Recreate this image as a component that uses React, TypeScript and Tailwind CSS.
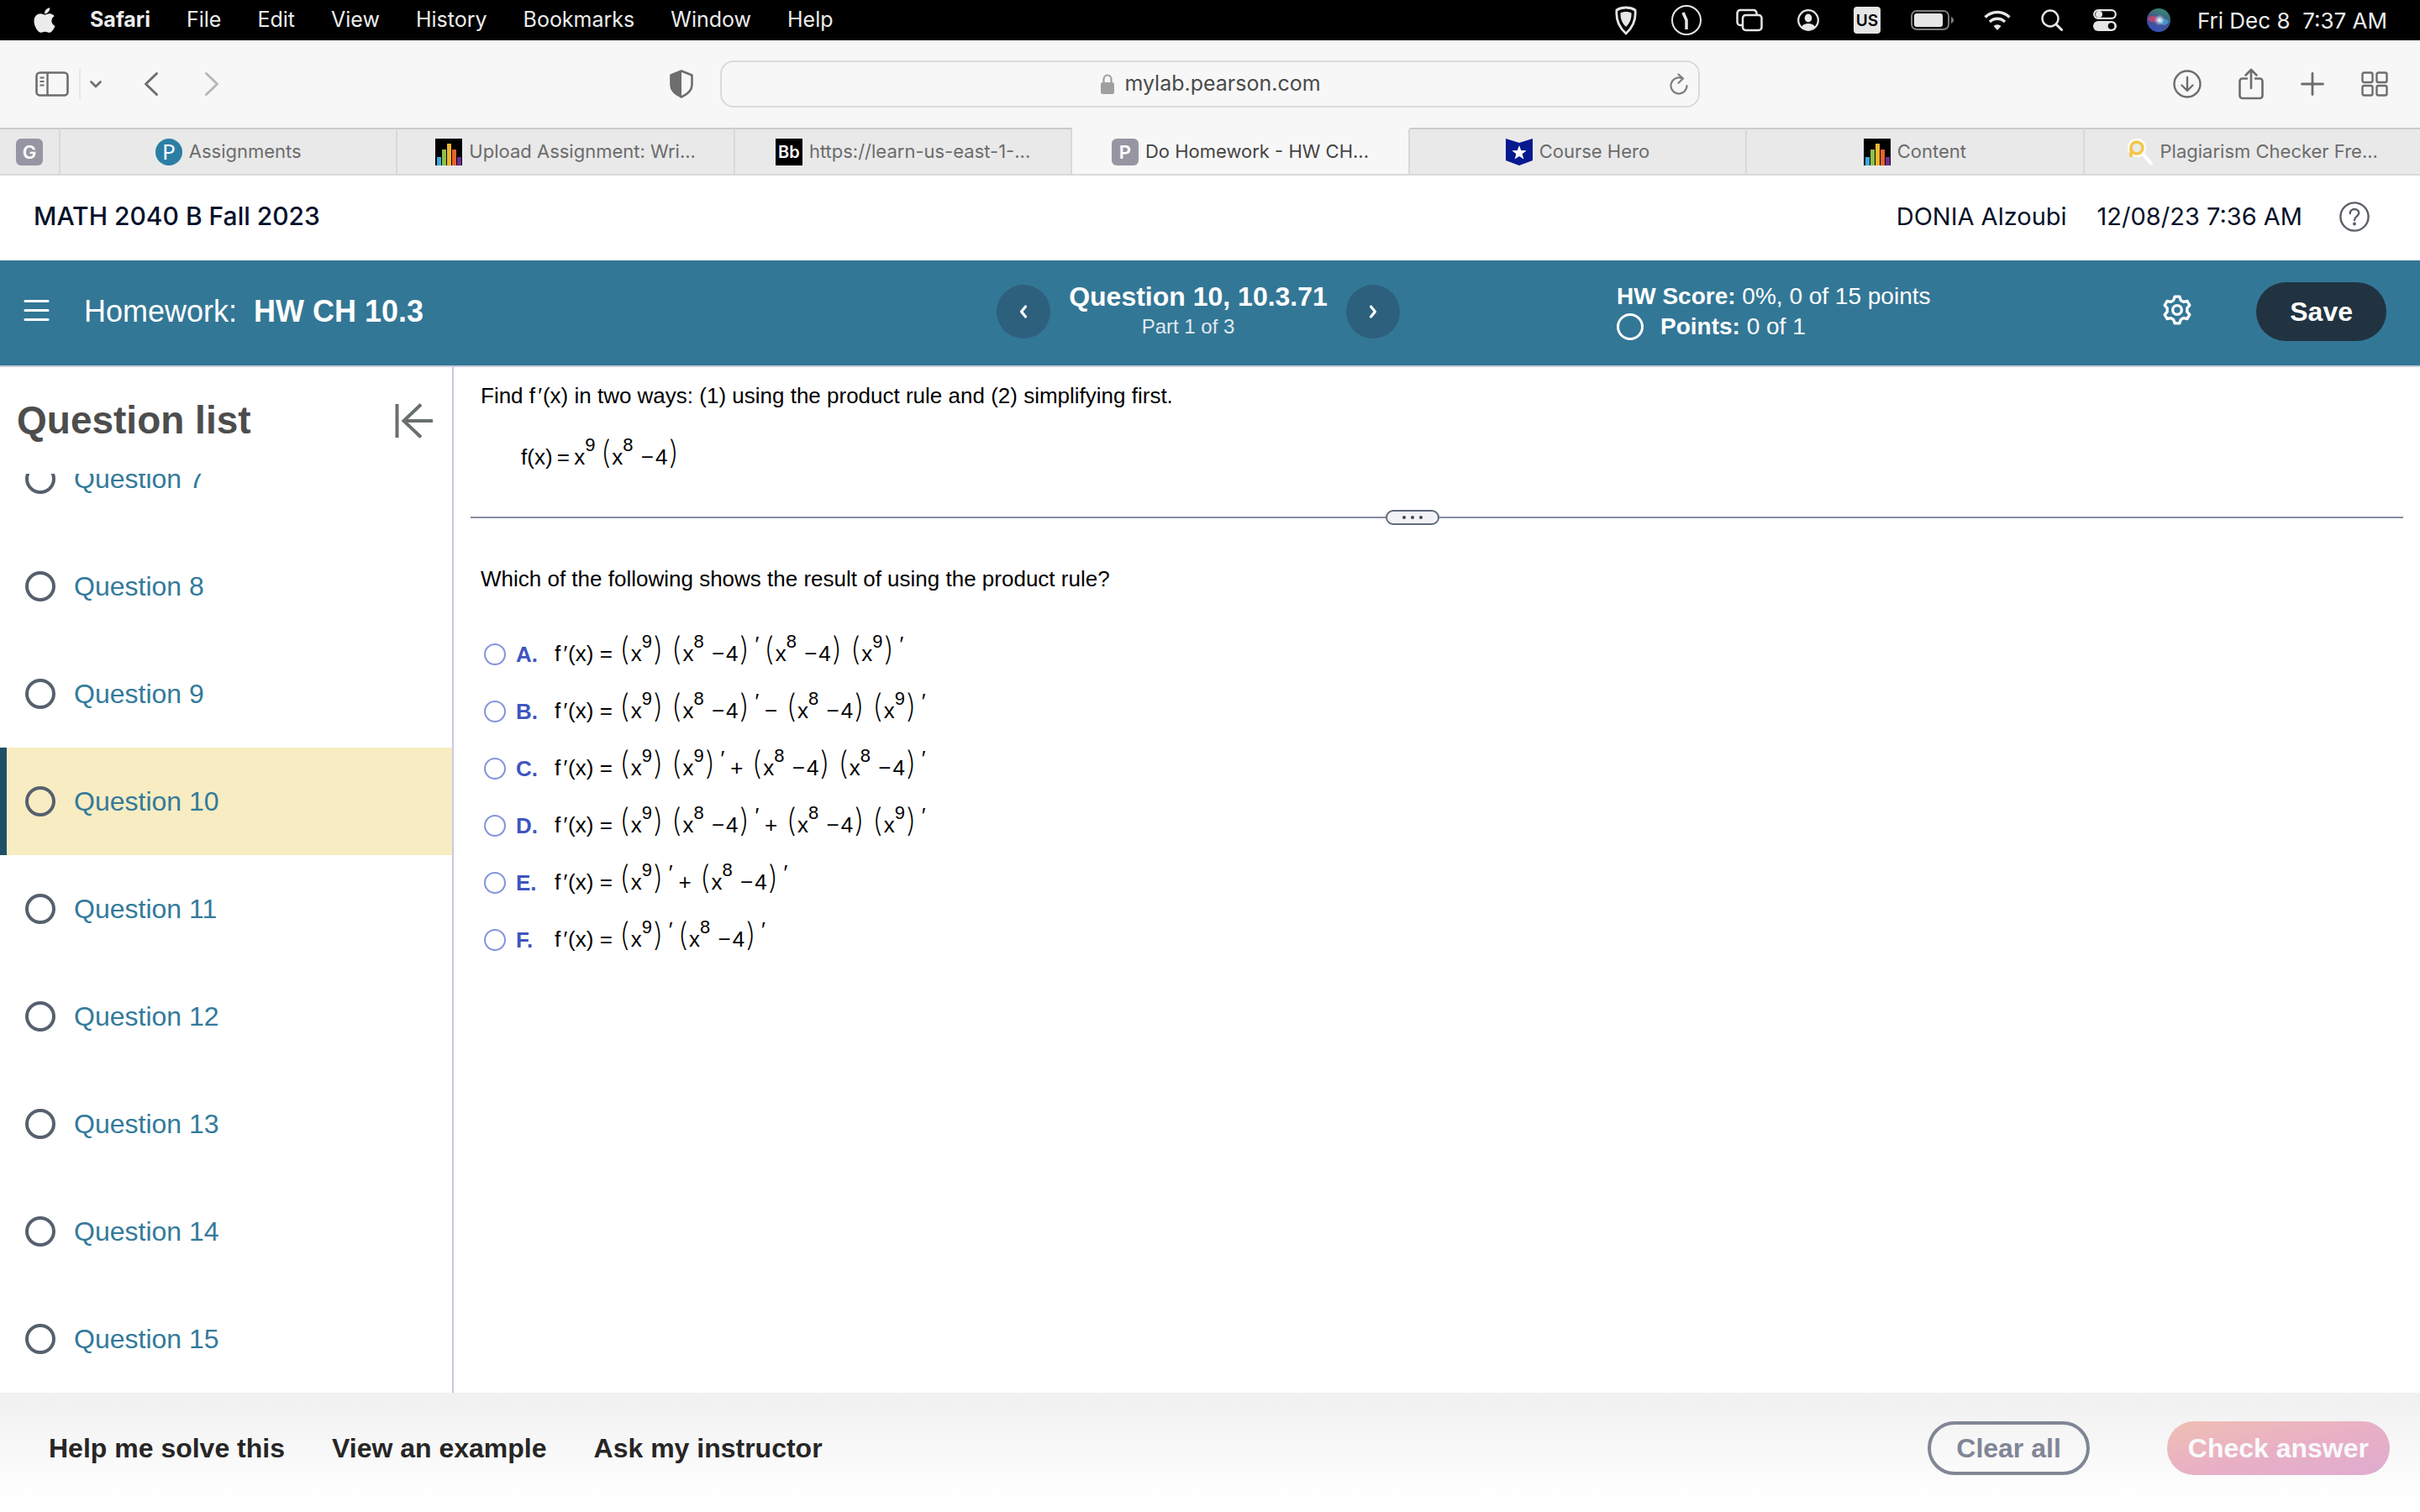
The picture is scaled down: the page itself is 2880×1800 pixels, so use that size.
import { Fragment, useState } from "react";
import type { ReactNode } from "react";
import { FaApple } from "react-icons/fa";

const menuItems = ["File", "Edit", "View", "History", "Bookmarks", "Window", "Help"];

const questions = [7, 8, 9, 10, 11, 12, 13, 14, 15];

// Formula markup: "(" and ")" are tall delimiters, "^" raises the next digit,
// "'" is a prime on a group, everything else is a plain run.
const choices = [
  { letter: "A", formula: "(x^9) (x^8 −4)'(x^8 −4) (x^9)'" },
  { letter: "B", formula: "(x^9) (x^8 −4)'− (x^8 −4) (x^9)'" },
  { letter: "C", formula: "(x^9) (x^9)'+ (x^8 −4) (x^8 −4)'" },
  { letter: "D", formula: "(x^9) (x^8 −4)'+ (x^8 −4) (x^9)'" },
  { letter: "E", formula: "(x^9)'+ (x^8 −4)'" },
  { letter: "F", formula: "(x^9)'(x^8 −4)'" },
];

/* ---------- Icons ---------- */

const BarsIcon = () => (
  <svg className="size-8 shrink-0" viewBox="0 0 32 32" aria-hidden="true">
    <rect width="32" height="32" fill="#000" />
    <rect x="2" y="22" width="5" height="10" fill="#3fa9e0" />
    <rect x="8" y="13" width="5" height="19" fill="#8dc04b" />
    <rect x="14" y="6" width="5" height="26" fill="#f0b52f" />
    <rect x="20" y="13" width="5" height="19" fill="#e8622e" />
    <rect x="26" y="22" width="5" height="10" fill="#6b2f91" />
  </svg>
);

const CourseHeroIcon = () => (
  <svg className="size-8 shrink-0" viewBox="0 0 32 32" aria-hidden="true">
    <path d="M0 0l16 5 16-5v26l-16 6-16-6z" fill="#06198f" />
    <path
      d="M16 8l2.2 6.1 6.5.2-5.1 4 1.8 6.2-5.4-3.6-5.4 3.6 1.8-6.2-5.1-4 6.5-.2z"
      fill="#fff"
    />
  </svg>
);

const MagnifierFavicon = () => (
  <svg className="size-8 shrink-0" viewBox="0 0 32 32" fill="none" aria-hidden="true">
    <path d="M20 19l10 12" stroke="#fff" strokeWidth="4" />
    <circle cx="12" cy="11" r="11" fill="#fff" />
    <circle cx="12" cy="11" r="7" fill="#e9e9e9" stroke="#f3c64a" strokeWidth="3.5" />
    <path d="M5 11v11" stroke="#f3c64a" strokeWidth="3.5" />
  </svg>
);

const LetterIcon = ({ letter }: { letter: string }) => (
  <span className="flex size-8 shrink-0 items-center justify-center rounded-md bg-[#9696a3] text-[22px] leading-none font-semibold text-white">
    {letter}
  </span>
);

const PearsonIcon = () => (
  <span className="flex size-8 shrink-0 items-center justify-center rounded-full bg-[#2c7ea5] font-['Lato'] text-[25px] leading-none text-white">
    P
  </span>
);

const BlackboardIcon = () => (
  <span className="flex size-8 shrink-0 items-center justify-center bg-black text-[20px] leading-none font-semibold text-white">
    Bb
  </span>
);

const ShieldIcon = () => (
  <svg className="h-9 w-[26px]" viewBox="0 0 26 36" aria-hidden="true">
    <path
      d="M13 3c4 0 8 1 11 3 1 10-2 20-11 28C4 26 1 16 2 6c3-2 7-3 11-3z"
      fill="none"
      stroke="#e6e6e6"
      strokeWidth="2.8"
    />
    <path
      d="M13 8c3 0 4.800.5 6.500 1.500.3 6.500-1.800 12-6.500 16.500-4.700-4.500-6.800-10-6.500-16.500C8.200 8.500 10 8 13 8z"
      fill="#e6e6e6"
    />
  </svg>
);

const ClockIcon = () => (
  <svg className="size-9" viewBox="0 0 36 36" fill="none" stroke="#e6e6e6" aria-hidden="true">
    <circle cx="18" cy="18" r="17" strokeWidth="2" />
    <path d="M14 9l4 9v11" strokeWidth="3.5" strokeLinejoin="round" />
  </svg>
);

const WindowsIcon = () => (
  <svg
    className="h-7 w-8"
    viewBox="0 0 32 28"
    fill="none"
    stroke="#e6e6e6"
    strokeWidth="2.5"
    aria-hidden="true"
  >
    <path d="M7 20H5a3.500 3.500 0 0 1-3.500-3.500v-11A3.500 3.500 0 0 1 5 2h16a3.500 3.500 0 0 1 3.500 3.500V7" />
    <rect x="8" y="8" width="22.5" height="18" rx="3.5" />
  </svg>
);

const UserIcon = () => (
  <svg className="size-[26px]" viewBox="0 0 26 26" aria-hidden="true">
    <circle cx="13" cy="13" r="11.8" fill="none" stroke="#e6e6e6" strokeWidth="2.2" />
    <ellipse cx="13" cy="10.5" rx="4.3" ry="5" fill="#e6e6e6" />
    <path d="M5 21c1.500-3 4.500-4 8-4s6.500 1 8 4c-2 2.500-5 3.500-8 3.500s-6-1-8-3.500z" fill="#e6e6e6" />
  </svg>
);

const BatteryIcon = () => (
  <svg className="h-6 w-[51px]" viewBox="0 0 51 24" aria-hidden="true">
    <rect x="1" y="1" width="44" height="22" rx="6" fill="none" stroke="#7c7c7c" strokeWidth="2" />
    <rect x="4" y="4" width="34" height="16" rx="3" fill="#e6e6e6" />
    <path d="M48 8c4 1.500 4 6.500 0 8z" fill="#7c7c7c" />
  </svg>
);

const WifiIcon = () => (
  <svg
    className="h-6 w-8"
    viewBox="0 0 32 24"
    fill="none"
    stroke="#e6e6e6"
    strokeWidth="3.4"
    aria-hidden="true"
  >
    <path d="M1.500 8.500a20.500 20.500 0 0 1 29 0" />
    <path d="M7 14a12.700 12.700 0 0 1 18 0" />
    <path d="M16 24l-4.500-5a6.500 6.500 0 0 1 9 0z" fill="#e6e6e6" stroke="none" />
  </svg>
);

const SearchIcon = () => (
  <svg className="size-[26px]" viewBox="0 0 26 26" fill="none" stroke="#e6e6e6" aria-hidden="true">
    <circle cx="11" cy="11" r="9.5" strokeWidth="2.4" />
    <path d="M18 18l6.500 6.500" strokeWidth="3" strokeLinecap="round" />
  </svg>
);

const ControlCentreIcon = () => (
  <svg className="h-[26px] w-7" viewBox="0 0 28 26" aria-hidden="true">
    <rect
      x="1.2"
      y="1.2"
      width="25.6"
      height="9.6"
      rx="4.8"
      fill="none"
      stroke="#e6e6e6"
      strokeWidth="2.2"
    />
    <circle cx="7" cy="6" r="4" fill="#e6e6e6" />
    <rect y="14" width="28" height="12" rx="6" fill="#e6e6e6" />
    <circle cx="21.5" cy="20" r="3.8" fill="#000" />
  </svg>
);

const SiriIcon = () => (
  <svg className="size-7" viewBox="0 0 28 28" aria-hidden="true">
    <defs>
      <radialGradient id="siriGlow">
        <stop offset="0" stopColor="#fff" />
        <stop offset="0.45" stopColor="#c8dcf5" stopOpacity="0.6" />
        <stop offset="1" stopColor="#3c4a8c" stopOpacity="0" />
      </radialGradient>
      <linearGradient id="siriBase" x1="0.2" y1="1" x2="0.6" y2="0">
        <stop offset="0" stopColor="#2f55c8" />
        <stop offset="0.5" stopColor="#4a4f8a" />
        <stop offset="1" stopColor="#2f8a72" />
      </linearGradient>
    </defs>
    <circle cx="14" cy="14" r="14" fill="url(#siriBase)" />
    <path d="M1 12c4-5 10-3 14 2-5 3-11 4-14-2z" fill="#d4426d" opacity="0.8" />
    <path d="M14 15c5-4 10-3 12 1-3 5-8 6-12-1z" fill="#3ea8d8" opacity="0.8" />
    <circle cx="15" cy="14" r="8" fill="url(#siriGlow)" />
  </svg>
);

/* ---------- Browser chrome ---------- */

const MenuBar = () => (
  <header className="flex h-12 items-center justify-between bg-black pr-[39px] pl-9 text-[25px] text-[#ececec]">
    <nav className="flex items-center gap-[43px]">
      <FaApple className="-mr-1.5 size-[34px]" aria-label="Apple" />
      <span className="font-bold">Safari</span>
      {menuItems.map((item) => (
        <span key={item}>{item}</span>
      ))}
    </nav>
    <div className="flex items-center gap-9">
      <div className="flex items-center gap-[41px]">
        <ShieldIcon />
        <ClockIcon />
        <WindowsIcon />
        <UserIcon />
        <span className="flex size-8 items-center justify-center rounded bg-[#e6e6e6] text-[19px] leading-none font-semibold text-black">
          US
        </span>
      </div>
      <BatteryIcon />
      <WifiIcon />
      <SearchIcon />
      <ControlCentreIcon />
      <SiriIcon />
      <span className="-ml-1 text-[26px] whitespace-pre">Fri Dec 8  7:37 AM</span>
    </div>
  </header>
);

const Toolbar = () => (
  <div className="flex h-[104px] items-center bg-[#f7f7f7] px-[38px] text-[#6d6d6d]">
    <div className="flex flex-1 items-center justify-between">
      <div className="flex items-center">
        <button aria-label="Show sidebar" className="pl-1">
          <svg className="h-[30px] w-10" viewBox="0 0 40 30" fill="none" stroke="currentColor">
            <rect x="1.5" y="1.5" width="37" height="27" rx="4" strokeWidth="2.6" />
            <path d="M14.500 1.500v27" strokeWidth="2.4" />
            <path d="M5.500 7.500h5M5.500 12h5M5.500 16.500h5" strokeWidth="2" />
          </svg>
        </button>
        <span className="ml-3 h-9 w-0.5 bg-[#e6e6e6]" />
        <button aria-label="Tab groups" className="ml-[10px]">
          <svg
            className="h-5 w-4"
            viewBox="0 0 16 20"
            fill="none"
            stroke="currentColor"
            strokeWidth="2.6"
            strokeLinecap="round"
            strokeLinejoin="round"
          >
            <path d="M2.500 7.500l5.500 5.500 5.500-5.500" />
          </svg>
        </button>
        <button aria-label="Back" className="ml-12">
          <svg
            className="h-[30px] w-5"
            viewBox="0 0 20 30"
            fill="none"
            stroke="currentColor"
            strokeWidth="3"
            strokeLinecap="round"
            strokeLinejoin="round"
          >
            <path d="M16.500 2.500L3.500 15l13 12.500" />
          </svg>
        </button>
        <button aria-label="Forward" className="ml-[52px] text-[#b9b9b9]">
          <svg
            className="h-[30px] w-5"
            viewBox="0 0 20 30"
            fill="none"
            stroke="currentColor"
            strokeWidth="3"
            strokeLinecap="round"
            strokeLinejoin="round"
          >
            <path d="M3.500 2.500l13 12.500-13 12.500" />
          </svg>
        </button>
      </div>
      <button aria-label="Privacy report" className="mr-8">
        <svg className="h-[34px] w-[28px]" viewBox="0 0 28 34">
          <path
            d="M14 1.500l12.500 5V18c0 7-6 11.500-12.500 14.500C7.500 29.500 1.500 25 1.500 18V6.500z"
            fill="none"
            stroke="currentColor"
            strokeWidth="2.6"
            strokeLinejoin="round"
          />
          <path d="M14 1.500v31C7.500 29.500 1.500 25 1.500 18V6.500z" fill="currentColor" />
        </svg>
      </button>
    </div>
    <div className="flex h-14 w-[42%] max-w-[1166px] items-center rounded-2xl border-2 border-[#dadada] px-3">
      <label className="flex flex-1 items-center justify-center gap-3 pl-6">
        <svg className="h-6 w-4" viewBox="0 0 16 24" fill="none" aria-hidden="true">
          <path d="M3.500 11V6.500a4.500 5 0 0 1 9 0V11" stroke="#9f9f9f" strokeWidth="2.2" />
          <rect y="10" width="16" height="14" rx="2.5" fill="#9f9f9f" />
        </svg>
        <input
          aria-label="Address"
          type="text"
          defaultValue="mylab.pearson.com"
          className="field-sizing-content bg-transparent text-[25px] text-[#4a4a4a] outline-none"
        />
      </label>
      <button aria-label="Reload">
        <svg
          className="h-[26px] w-[22px]"
          viewBox="0 0 22 26"
          fill="none"
          stroke="#7f7f7f"
          strokeWidth="2.2"
          strokeLinecap="round"
          strokeLinejoin="round"
        >
          <path d="M20.500 15A9.500 9.500 0 1 1 15 6.400M10.500 1.500l5.500 5-5.500 5.200" />
        </svg>
      </button>
    </div>
    <div className="flex flex-1 items-center justify-end gap-11">
      <button aria-label="Downloads">
        <svg
          className="size-[34px]"
          viewBox="0 0 34 34"
          fill="none"
          stroke="currentColor"
          strokeWidth="2.4"
          strokeLinecap="round"
          strokeLinejoin="round"
        >
          <circle cx="17" cy="17" r="15.5" />
          <path d="M17 9v16M10.500 18.500L17 25l6.500-6.500" />
        </svg>
      </button>
      <button aria-label="Share">
        <svg
          className="h-[38px] w-[30px]"
          viewBox="0 0 30 38"
          fill="none"
          stroke="currentColor"
          strokeWidth="2.6"
          strokeLinecap="round"
          strokeLinejoin="round"
        >
          <path d="M10 12.500H4.500a3 3 0 0 0-3 3V33a3 3 0 0 0 3 3h21a3 3 0 0 0 3-3V15.500a3 3 0 0 0-3-3H20M15 24V2M8.500 8.500L15 2l6.500 6.500" />
        </svg>
      </button>
      <button aria-label="New tab">
        <svg
          className="size-7"
          viewBox="0 0 28 28"
          fill="none"
          stroke="currentColor"
          strokeWidth="2.8"
          strokeLinecap="round"
        >
          <path d="M14 1.500v25M1.500 14h25" />
        </svg>
      </button>
      <button aria-label="Tab overview">
        <svg
          className="h-[30px] w-8"
          viewBox="0 0 32 30"
          fill="none"
          stroke="currentColor"
          strokeWidth="2.4"
        >
          <rect x="1.5" y="1.5" width="12" height="11.5" rx="2" />
          <rect x="18.5" y="1.5" width="12" height="11.5" rx="2" />
          <rect x="1.5" y="17" width="12" height="11.5" rx="2" />
          <rect x="18.5" y="17" width="12" height="11.5" rx="2" />
        </svg>
      </button>
    </div>
  </div>
);

const tabs: { title: string; icon: ReactNode; active?: boolean }[] = [
  { title: "Assignments", icon: <PearsonIcon /> },
  { title: "Upload Assignment: Wri...", icon: <BarsIcon /> },
  { title: "https://learn-us-east-1-...", icon: <BlackboardIcon /> },
  { title: "Do Homework - HW CH...", icon: <LetterIcon letter="P" />, active: true },
  { title: "Course Hero", icon: <CourseHeroIcon /> },
  { title: "Content", icon: <BarsIcon /> },
  { title: "Plagiarism Checker Fre...", icon: <MagnifierFavicon /> },
];

const TabStrip = () => (
  <nav className="flex h-[57px] border-b-2 border-[#d9d9d9] text-[22px]">
    <a
      href="#google"
      aria-label="Pinned tab"
      className="flex w-[72px] items-center justify-center border-t-2 border-r-2 border-t-[#cbcbcb] border-r-[#d9d9d9] bg-[#e9e9e9]"
    >
      <LetterIcon letter="G" />
    </a>
    {tabs.map((tab) => (
      <a
        key={tab.title}
        href="#tab"
        className={`flex flex-1 items-center justify-center gap-2 border-t-2 border-r-2 border-r-[#d9d9d9] whitespace-nowrap last:border-r-0 ${
          tab.active
            ? "border-t-[#f7f7f7] bg-[#f7f7f7] text-[#454545]"
            : "border-t-[#cbcbcb] bg-[#e9e9e9] text-[#6c6c6c]"
        }`}
      >
        {tab.icon}
        <span>{tab.title}</span>
      </a>
    ))}
  </nav>
);

/* ---------- Course page ---------- */

const CourseHeader = () => (
  <div className="flex h-[101px] items-center justify-between bg-white pr-[60px] pb-1 pl-10 text-[#05112a]">
    <h1 className="text-[30px] font-medium">MATH 2040 B Fall 2023</h1>
    <div className="flex items-center text-[29px]">
      <span>DONIA Alzoubi</span>
      <span className="ml-9">12/08/23 7:36 AM</span>
      <button aria-label="Help" className="ml-11">
        <svg
          className="size-9"
          viewBox="0 0 36 36"
          fill="none"
          stroke="#5a5f66"
          strokeWidth="2.4"
          strokeLinecap="round"
        >
          <circle cx="18" cy="18" r="16.6" />
          <path d="M12.800 14c0-3.200 2.300-5 5.200-5s5.200 1.800 5.200 4.600c0 3.900-5.200 4.200-5.200 8.400" />
          <circle cx="18" cy="26.5" r="0.8" fill="#5a5f66" />
        </svg>
      </button>
    </div>
  </div>
);

const AssignmentBar = () => (
  <div className="flex h-[127px] items-center border-b-2 border-[#c7cbdc] bg-[#337796] pr-10 pb-1 pl-7 text-white">
    <div className="flex w-[1158px] items-center">
      <button aria-label="Menu">
        <svg
          className="h-[30px] w-8"
          viewBox="0 0 32 30"
          stroke="#fff"
          strokeWidth="3.2"
          strokeLinecap="round"
        >
          <path d="M2 2.500h27M2 13.500h27M2 24.500h27" />
        </svg>
      </button>
      <h2 className="ml-10 text-[36px]">
        Homework:<strong className="ml-5">HW CH 10.3</strong>
      </h2>
    </div>
    <div className="flex items-center gap-5">
      <button
        aria-label="Previous question"
        className="flex size-16 items-center justify-center rounded-full bg-[#2c607d]"
      >
        <svg
          className="size-5"
          viewBox="0 0 20 20"
          fill="none"
          stroke="#fff"
          strokeWidth="3.2"
          strokeLinecap="round"
          strokeLinejoin="round"
        >
          <path d="M12.500 4L7.500 10l5 6" />
        </svg>
      </button>
      <div className="w-[312px]">
        <div className="text-center text-[32px] leading-9 font-bold">Question 10, 10.3.71</div>
        <div className="pr-6 text-center text-[24px] leading-9 text-[#e0eaf0]">Part 1 of 3</div>
      </div>
      <button
        aria-label="Next question"
        className="flex size-16 items-center justify-center rounded-full bg-[#2c607d]"
      >
        <svg
          className="size-5"
          viewBox="0 0 20 20"
          fill="none"
          stroke="#fff"
          strokeWidth="3.2"
          strokeLinecap="round"
          strokeLinejoin="round"
        >
          <path d="M7.500 4l5 6-5 6" />
        </svg>
      </button>
    </div>
    <div className="ml-[258px] text-[28px] leading-9">
      <div>
        <strong>HW Score:</strong> 0%, 0 of 15 points
      </div>
      <div className="flex items-center gap-5">
        <span className="size-8 rounded-full border-[3px] border-white" />
        <span>
          <strong>Points:</strong> 0 of 1
        </span>
      </div>
    </div>
    <div className="ml-auto flex items-center gap-[74px]">
      <button aria-label="Settings" className="pb-1">
        <svg
          className="size-10"
          viewBox="0 0 24 24"
          fill="none"
          stroke="#fff"
          strokeWidth="2"
          strokeLinejoin="round"
        >
          <path d="M10.300 2.500h3.400l.9 2.600 1.900 1.100 2.700-.5 1.700 2.900-1.800 2.100v2.600l1.800 2.100-1.700 2.900-2.700-.5-1.900 1.100-.9 2.600h-3.400l-.9-2.600-1.900-1.100-2.700.5-1.700-2.900 1.800-2.100v-2.600L3.100 8.600l1.700-2.900 2.700.5 1.900-1.100z" />
          <circle cx="12" cy="12" r="3.2" />
        </svg>
      </button>
      <button className="h-[70px] rounded-full bg-[#213341] px-10 text-[32px] font-bold">Save</button>
    </div>
  </div>
);

const QuestionList = () => (
  <aside className="flex w-[540px] shrink-0 flex-col border-r-2 border-[#c7cbdc] bg-white">
    <div className="flex h-[127px] items-center justify-between pr-[22px] pl-5">
      <h2 className="text-[46px] font-bold text-[#4d4d4d]">Question list</h2>
      <button aria-label="Collapse question list">
        <svg
          className="h-[42px] w-[46px]"
          viewBox="0 0 46 42"
          fill="none"
          stroke="#696f6f"
          strokeWidth="4"
        >
          <path d="M2.500 1v40M45 21H11M31 1.500L10.500 21 31 40.500" />
        </svg>
      </button>
    </div>
    {/* Scrolled to the end, so the first row is partly hidden */}
    <ul className="flex min-h-0 flex-1 flex-col justify-end overflow-hidden">
      {questions.map((n) => (
        <li key={n} className="shrink-0">
          <a
            href={`#question-${n}`}
            className={`flex h-32 items-center gap-[22px] border-l-8 pl-[22px] text-[32px] text-[#337a9b] ${
              n === 10 ? "border-[#1f4f66] bg-[#f8ecc2]" : "border-transparent"
            }`}
          >
            <span className="size-9 rounded-full border-4 border-[#56606e]" />
            Question {n}
          </a>
        </li>
      ))}
    </ul>
  </aside>
);

const Prime = () => <span className="mx-0.5 italic">′</span>;

const Formula = ({ source }: { source: string }) => {
  const parts = source.match(/\^.|[^^]/g) ?? [];
  return (
    <>
      {parts.map((part, i) => {
        if (part === "(" || part === ")") {
          return (
            <span
              key={i}
              className="mx-px align-[1px] font-['Inter'] text-[38px] leading-none font-extralight"
            >
              {part}
            </span>
          );
        }
        if (part[0] === "^") {
          return (
            <span key={i} className="align-[16px] text-[22px] leading-none">
              {part[1]}
            </span>
          );
        }
        if (part === "−" || part === "+") {
          return (
            <span key={i} className="mx-0.5">
              {part}
            </span>
          );
        }
        if (part === "'") {
          return (
            <span key={i} className="mr-1.5 ml-1 align-[11px] leading-none italic">
              ′
            </span>
          );
        }
        return <Fragment key={i}>{part}</Fragment>;
      })}
    </>
  );
};

const QuestionBody = () => {
  const [answer, setAnswer] = useState("");

  return (
    <main className="min-w-0 flex-1 bg-white px-5 text-[26px] text-black">
      <div className="px-3 pt-[18px]">
        <p className="leading-8">
          Find f<Prime />
          (x) in two ways: (1) using the product rule and (2) simplifying first.
        </p>
        <p className="mt-8 ml-12 h-12 leading-[48px] whitespace-nowrap">
          f(x){"\u2009"}={"\u2009"}
          <Formula source={"x^9\u2009(x^8 −4)"} />
        </p>
      </div>

      {/* Pane splitter */}
      <div className="mt-10 flex items-center">
        <span className="h-0.5 flex-[19] bg-[#878da2]" />
        <button
          aria-label="Resize panes"
          className="flex h-[18px] w-16 items-center justify-center gap-1.5 rounded-full border-2 border-[#5f6b7c] bg-[#f2f3f6]"
        >
          <span className="size-1 rounded-full bg-[#3f4650]" />
          <span className="size-1 rounded-full bg-[#3f4650]" />
          <span className="size-1 rounded-full bg-[#3f4650]" />
        </button>
        <span className="h-0.5 flex-[20] bg-[#878da2]" />
      </div>

      <fieldset className="mt-12 px-3">
        <legend className="leading-8">
          Which of the following shows the result of using the product rule?
        </legend>
        <div className="mt-10">
          {choices.map(({ letter, formula }) => (
            <label key={letter} className="flex h-[68px] items-center pl-1">
              <input
                type="radio"
                name="answer"
                value={letter}
                checked={answer === letter}
                onChange={() => setAnswer(letter)}
                className="size-[26px] appearance-none rounded-full border-2 border-[#8494dc] checked:border-8"
              />
              <span className="ml-3 w-[46px] font-bold text-[#3f55c0]">{letter}.</span>
              <span className="mb-1 h-12 leading-[48px] whitespace-nowrap">
                f<Prime />
                (x) = <Formula source={formula} />
              </span>
            </label>
          ))}
        </div>
      </fieldset>
    </main>
  );
};

const ActionBar = () => (
  <footer className="flex h-[142px] shrink-0 items-center justify-between bg-linear-to-b from-[#f0f0f0] to-white to-90% pr-9 pb-[10px] pl-[58px] text-[32px] font-bold">
    <div className="flex gap-14 text-[#262626]">
      <button>Help me solve this</button>
      <button>View an example</button>
      <button>Ask my instructor</button>
    </div>
    <div className="flex gap-[92px]">
      <button className="h-16 rounded-full border-4 border-[#808695] px-[30px] text-[#808695]">
        Clear all
      </button>
      <button className="h-16 rounded-full bg-linear-to-br from-[#efbfb3] via-[#e9b0c4] to-[#dfabd0] px-[25px] text-[#fafafc]">
        Check answer
      </button>
    </div>
  </footer>
);

const App = () => (
  <div className="flex h-screen flex-col overflow-hidden bg-white">
    <div className="shrink-0 font-['Inter',sans-serif]">
      <MenuBar />
      <Toolbar />
      <TabStrip />
      <CourseHeader />
    </div>
    <div className="flex min-h-0 flex-1 flex-col font-['Liberation_Sans',Arial,sans-serif]">
      <AssignmentBar />
      <div className="flex min-h-0 flex-1">
        <QuestionList />
        <QuestionBody />
      </div>
      <ActionBar />
    </div>
  </div>
);

export default App;
